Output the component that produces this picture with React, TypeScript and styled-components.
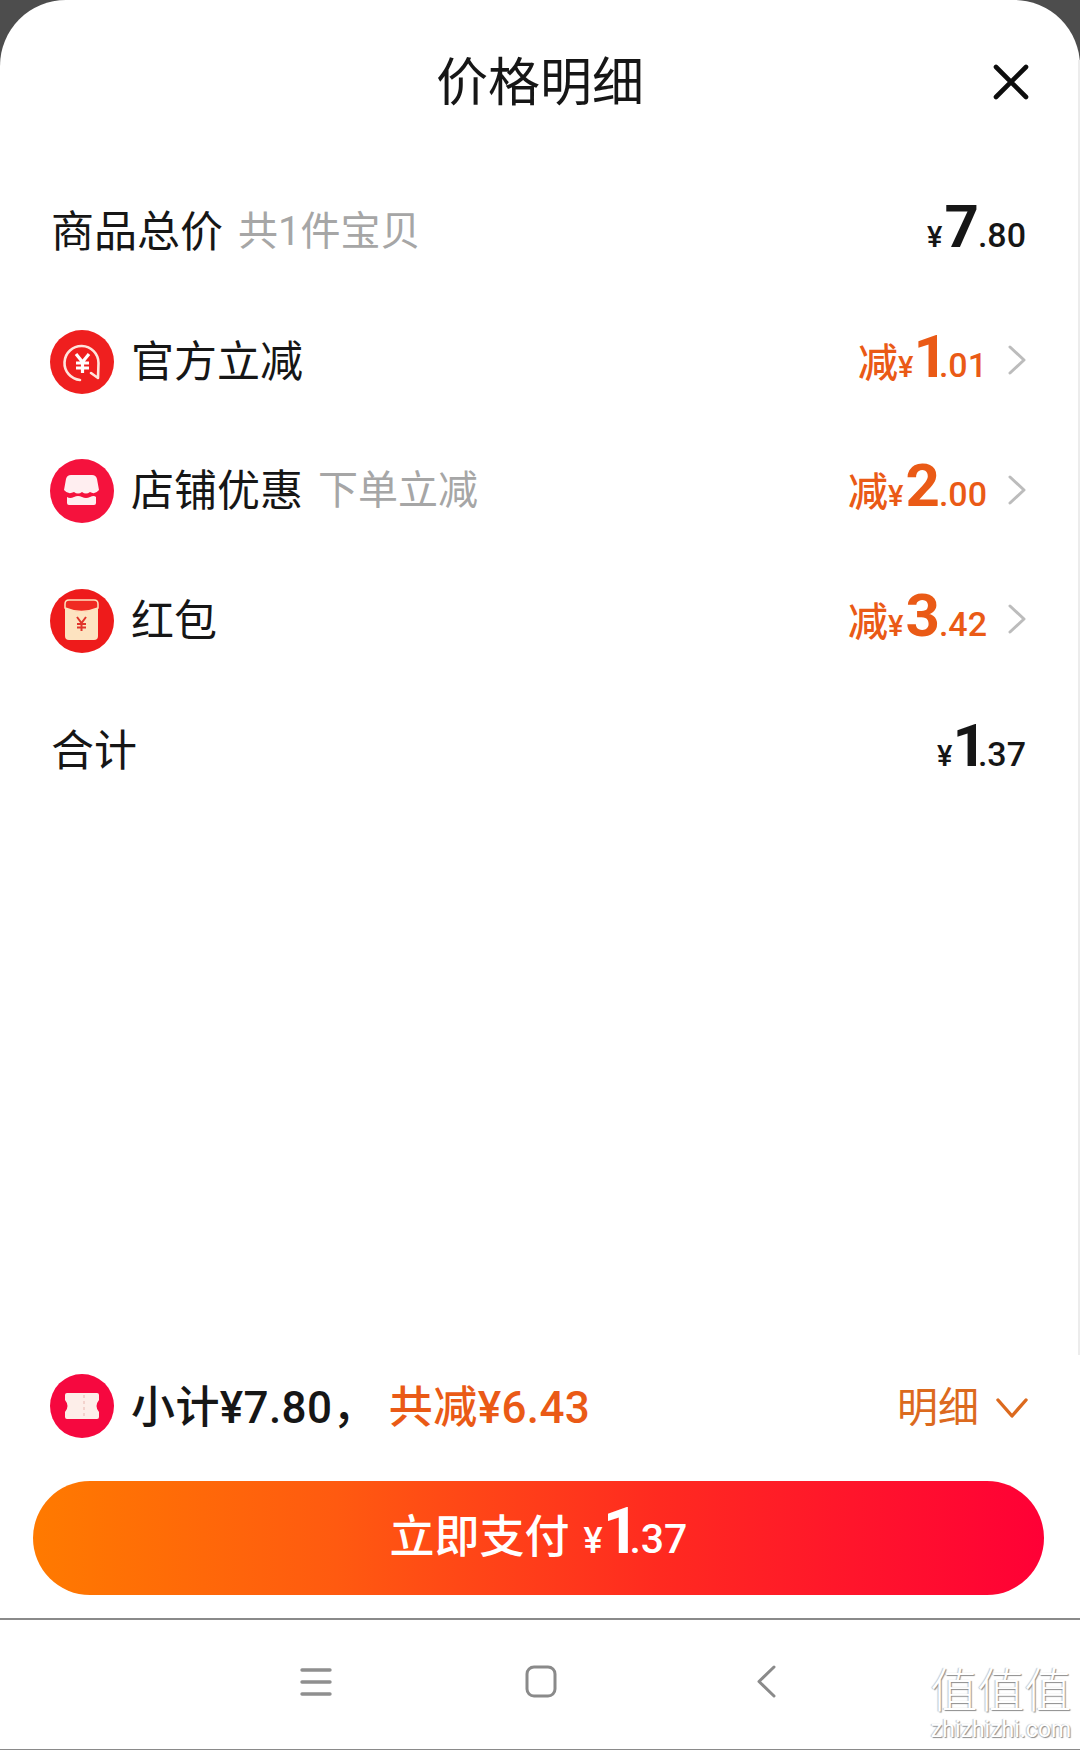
import React from "react";
import styled, { createGlobalStyle } from "styled-components";

const GlobalStyle = createGlobalStyle`
  html, body {
    margin: 0;
    padding: 0;
    background: #4d4d4d;
  }
  body {
    font-family: Roboto, "Noto Sans CJK SC", sans-serif;
  }
`;

const ORANGE = "#ea5a16";
const INK = "#161616";

const Screen = styled.div`
  position: relative;
  width: 1080px;
  height: 1750px;
  display: flex;
  flex-direction: column;
  overflow: hidden;
  background: #4d4d4d;
`;

const Sheet = styled.div`
  flex: 1;
  display: flex;
  flex-direction: column;
  background: #fff;
  border-radius: 66px 66px 0 0;
`;

const Header = styled.div`
  height: 167px;
  padding: 0 51px;
  box-sizing: border-box;
  display: grid;
  grid-template-columns: 1fr auto 1fr;
  align-items: center;
`;

const Title = styled.div`
  grid-column: 2;
  font-size: 52px;
  line-height: 60px;
  color: ${INK};
`;

const CloseButton = styled.div`
  justify-self: end;
  display: flex;
  margin-bottom: 4px;
`;

const Row = styled.div`
  height: 129.7px;
  padding: 0 54px 0 51px;
  display: flex;
  align-items: center;
  justify-content: space-between;
`;

const RowLeft = styled.div`
  display: flex;
  align-items: center;
`;

const RowRight = styled.div`
  display: flex;
  align-items: center;
  gap: 21px;
`;

const ArrowSlot = styled.div`
  display: flex;
  margin-bottom: 3px;
`;

const BadgeSlot = styled.div`
  width: 64px;
  height: 64px;
  margin-left: -1px;
  margin-right: 17px;
  display: flex;
`;

const Label = styled.span`
  font-size: 43px;
  line-height: 58px;
  color: ${INK};
`;

const SubLabel = styled.span`
  margin-left: 15px;
  font-size: 40px;
  line-height: 58px;
  color: #a6a6a6;
`;

const Amount = styled.div<{ $tone: string }>`
  display: flex;
  align-items: baseline;
  line-height: 70px;
  color: ${(p) => p.$tone};
`;

const AmountWord = styled.span`
  font-size: 40px;
  font-weight: 500;
`;

const AmountYen = styled.span<{ $tight?: boolean }>`
  font-size: 29px;
  font-weight: 500;
  margin-right: ${(p) => (p.$tight ? "0" : "2px")};
`;

// the "1" has a wide advance in Roboto, the reference digit sits tight against the tail
const AmountBig = styled.span<{ $narrow?: boolean }>`
  font-size: 60px;
  font-weight: 700;
  letter-spacing: ${(p) => (p.$narrow ? "-9px" : "-1px")};
`;

const AmountTail = styled.span`
  font-size: 34px;
  font-weight: 500;
`;

const Footer = styled.div`
  margin-top: auto;
  padding: 0 36px 23px 33px;
`;

const Summary = styled.div`
  height: 64px;
  margin-bottom: 43px;
  padding: 0 16px 0 18px;
  display: flex;
  align-items: center;
`;

const SummaryText = styled.span<{ $tone: string }>`
  margin-top: 4px;
  font-size: 44px;
  line-height: 58px;
  font-weight: 500;
  letter-spacing: 0.4px;
  color: ${(p) => p.$tone};
`;

const SummaryGap = styled.span`
  width: 12px;
`;

const DetailToggle = styled.div`
  margin: 3px 0 0 auto;
  display: flex;
  align-items: center;
  gap: 17px;
  font-size: 41px;
  line-height: 56px;
  color: #dc6a1e;
`;

const PayButton = styled.div`
  height: 114px;
  border-radius: 57px;
  background: linear-gradient(90deg, #ff7a00 0%, #ff5a10 30%, #ff2a20 62%, #ff0036 100%);
  color: #fff;
  display: flex;
  align-items: center;
  justify-content: center;
`;

const PayLabel = styled.span`
  font-size: 45px;
  line-height: 60px;
  font-weight: 500;
  margin: 0 14px 0 0;
`;

const PayPrice = styled.div`
  display: flex;
  align-items: baseline;
  line-height: 114px;
  padding-bottom: 4px;
`;

const PayYen = styled.span`
  font-size: 36px;
  font-weight: 500;
`;

const PayBig = styled.span`
  font-size: 64px;
  font-weight: 700;
  letter-spacing: -10px;
`;

const PayTail = styled.span`
  font-size: 41px;
  font-weight: 500;
`;

const NavBar = styled.div`
  height: 132px;
  box-sizing: border-box;
  background: #fff;
  border-top: 2px solid #8a8a8a;
  border-bottom: 1px solid #8a8a8a;
  display: flex;
  align-items: center;
  justify-content: center;
  gap: 185px;
  padding: 0 0 6px 2px;
`;

const NavSlot = styled.div`
  width: 40px;
  display: flex;
  justify-content: center;
`;

const EdgeStrip = styled.div`
  position: absolute;
  top: 60px;
  right: 0;
  width: 2px;
  height: 1295px;
  background: #ececec;
`;

const Watermark = styled.div`
  position: absolute;
  right: 8px;
  bottom: 7px;
  width: 142px;
  display: flex;
  flex-direction: column;
  align-items: center;
  color: #fff;
  text-shadow: 1px 1px 1px #8c8c8c, -1px 0 1px #c4c4c4;
`;

const WatermarkMark = styled.div`
  font-size: 47px;
  line-height: 52px;
  font-weight: 300;
`;

const WatermarkSite = styled.div`
  font-size: 23px;
  line-height: 26px;
`;

const RefundBadge = () => (
  <svg width="64" height="64" viewBox="0 0 64 64">
    <circle cx="32" cy="32" r="32" fill="#ef1f1f" />
    <path d="M30 50 A17 17 0 1 1 48.5 33 L48 48 L41 43" fill="none" stroke="#ffe4dc" strokeWidth="2.6" strokeLinecap="round" strokeLinejoin="round" />
    <path d="M26 24 L32.5 32 L39 24 M32.5 32 V43 M26 33 H39 M26 38 H39" fill="none" stroke="#fff" strokeWidth="3.2" />
  </svg>
);

const ShopBadge = () => (
  <svg width="64" height="64" viewBox="0 0 64 64">
    <circle cx="32" cy="32" r="32" fill="#f5123d" />
    <path d="M21 16 H42 Q46 16 47 20 L49 31 Q45 36 40 33 Q36 36 32 33 Q28 36 24 33 Q18 36 14 31 L16 20 Q17 16 21 16 Z" fill="#ffeef0" />
    <path d="M17 38 Q20 40 24 38 Q28 36 32 38 Q36 40 40 38 Q44 36 46 38 V44 Q46 46 44 46 H19 Q17 46 17 44 Z" fill="#ffeef0" />
  </svg>
);

const EnvelopeBadge = () => (
  <svg width="64" height="64" viewBox="0 0 64 64">
    <circle cx="32" cy="32" r="32" fill="#ee1b1b" />
    <rect x="15" y="11" width="33" height="40" rx="4" fill="#fde3c0" />
    <path d="M15 15 Q15 11 19 11 H44 Q48 11 48 15 V19 Q31.5 26 15 19 Z" fill="#f02a22" stroke="#fde3c0" strokeWidth="1.5" />
    <path d="M27 28 L31.5 34 L36 28 M31.5 34 V42 M27 35 H36 M27 38.5 H36" fill="none" stroke="#e0352b" strokeWidth="2" />
  </svg>
);

const TicketBadge = () => (
  <svg width="64" height="64" viewBox="0 0 64 64">
    <circle cx="32" cy="32" r="32" fill="#f6083f" />
    <path d="M17 19 H47 Q49 19 49 21 V26 Q44 32 49 38 V43 Q49 45 47 45 H17 Q15 45 15 43 V38 Q20 32 15 26 V21 Q15 19 17 19 Z" fill="#fdeee9" />
    <path d="M34 21 V43" stroke="#f0c9c4" strokeWidth="1.5" strokeDasharray="3 3" />
  </svg>
);

const CloseIcon = () => (
  <svg width="36" height="36" viewBox="0 0 36 36">
    <path d="M3 3 L33 33 M33 3 L3 33" stroke="#0d0d0d" strokeWidth="4.6" strokeLinecap="round" />
  </svg>
);

const RowArrow = () => (
  <svg width="18" height="30" viewBox="0 0 18 30">
    <path d="M2 2 L16 15 L2 28" fill="none" stroke="#bcbcbc" strokeWidth="3" strokeLinecap="round" strokeLinejoin="round" />
  </svg>
);

const DownArrow = () => (
  <svg width="32" height="22" viewBox="0 0 32 22">
    <path d="M2 3 L16 19 L30 3" fill="none" stroke="#dc6a1e" strokeWidth="3.4" strokeLinecap="round" strokeLinejoin="round" />
  </svg>
);

const MenuIcon = () => (
  <svg width="32" height="30" viewBox="0 0 32 30">
    <path d="M2 3 H30 M2 15 H30 M2 27 H30" stroke="#8f8f8f" strokeWidth="3.4" strokeLinecap="round" />
  </svg>
);

const HomeIcon = () => (
  <svg width="32" height="33" viewBox="0 0 32 33">
    <rect x="2" y="2" width="28" height="29" rx="7" fill="none" stroke="#8a8a8a" strokeWidth="3" />
  </svg>
);

const BackIcon = () => (
  <svg width="20" height="33" viewBox="0 0 20 33">
    <path d="M18 2 L3 16.5 L18 31" fill="none" stroke="#8a8a8a" strokeWidth="3" strokeLinecap="round" strokeLinejoin="round" />
  </svg>
);

type PriceProps = { word?: string; big: string; tail: string; tone: string };

const Price = ({ word, big, tail, tone }: PriceProps) => (
  <Amount $tone={tone}>
    {word && <AmountWord>{word}</AmountWord>}
    <AmountYen $tight={big === "1"}>¥</AmountYen>
    <AmountBig $narrow={big === "1"}>{big}</AmountBig>
    <AmountTail>{tail}</AmountTail>
  </Amount>
);

const discounts = [
  { badge: <RefundBadge />, label: "官方立减", big: "1", tail: ".01" },
  { badge: <ShopBadge />, label: "店铺优惠", sub: "下单立减", big: "2", tail: ".00" },
  { badge: <EnvelopeBadge />, label: "红包", big: "3", tail: ".42" },
];

const App = () => {
  return (
    <Screen>
      <GlobalStyle />
      <Sheet>
        <Header>
          <Title>价格明细</Title>
          <CloseButton>
            <CloseIcon />
          </CloseButton>
        </Header>

        <Row>
          <RowLeft>
            <Label>商品总价</Label>
            <SubLabel>共1件宝贝</SubLabel>
          </RowLeft>
          <Price big="7" tail=".80" tone={INK} />
        </Row>

        {discounts.map((d) => (
          <Row key={d.label}>
            <RowLeft>
              <BadgeSlot>{d.badge}</BadgeSlot>
              <Label>{d.label}</Label>
              {d.sub && <SubLabel>{d.sub}</SubLabel>}
            </RowLeft>
            <RowRight>
              <Price word="减" big={d.big} tail={d.tail} tone={ORANGE} />
              <ArrowSlot>
                <RowArrow />
              </ArrowSlot>
            </RowRight>
          </Row>
        ))}

        <Row>
          <RowLeft>
            <Label>合计</Label>
          </RowLeft>
          <Price big="1" tail=".37" tone={INK} />
        </Row>

        <Footer>
          <Summary>
            <BadgeSlot>
              <TicketBadge />
            </BadgeSlot>
            <SummaryText $tone={INK}>小计¥7.80，</SummaryText>
            <SummaryGap />
            <SummaryText $tone={ORANGE}>共减¥6.43</SummaryText>
            <DetailToggle>
              明细
              <DownArrow />
            </DetailToggle>
          </Summary>
          <PayButton>
            <PayLabel>立即支付</PayLabel>
            <PayPrice>
              <PayYen>¥</PayYen>
              <PayBig>1</PayBig>
              <PayTail>.37</PayTail>
            </PayPrice>
          </PayButton>
        </Footer>
      </Sheet>

      <NavBar>
        <NavSlot>
          <MenuIcon />
        </NavSlot>
        <NavSlot>
          <HomeIcon />
        </NavSlot>
        <NavSlot>
          <BackIcon />
        </NavSlot>
      </NavBar>

      <EdgeStrip />
      <Watermark>
        <WatermarkMark>值值值</WatermarkMark>
        <WatermarkSite>zhizhizhi.com</WatermarkSite>
      </Watermark>
    </Screen>
  );
};

export default App;
